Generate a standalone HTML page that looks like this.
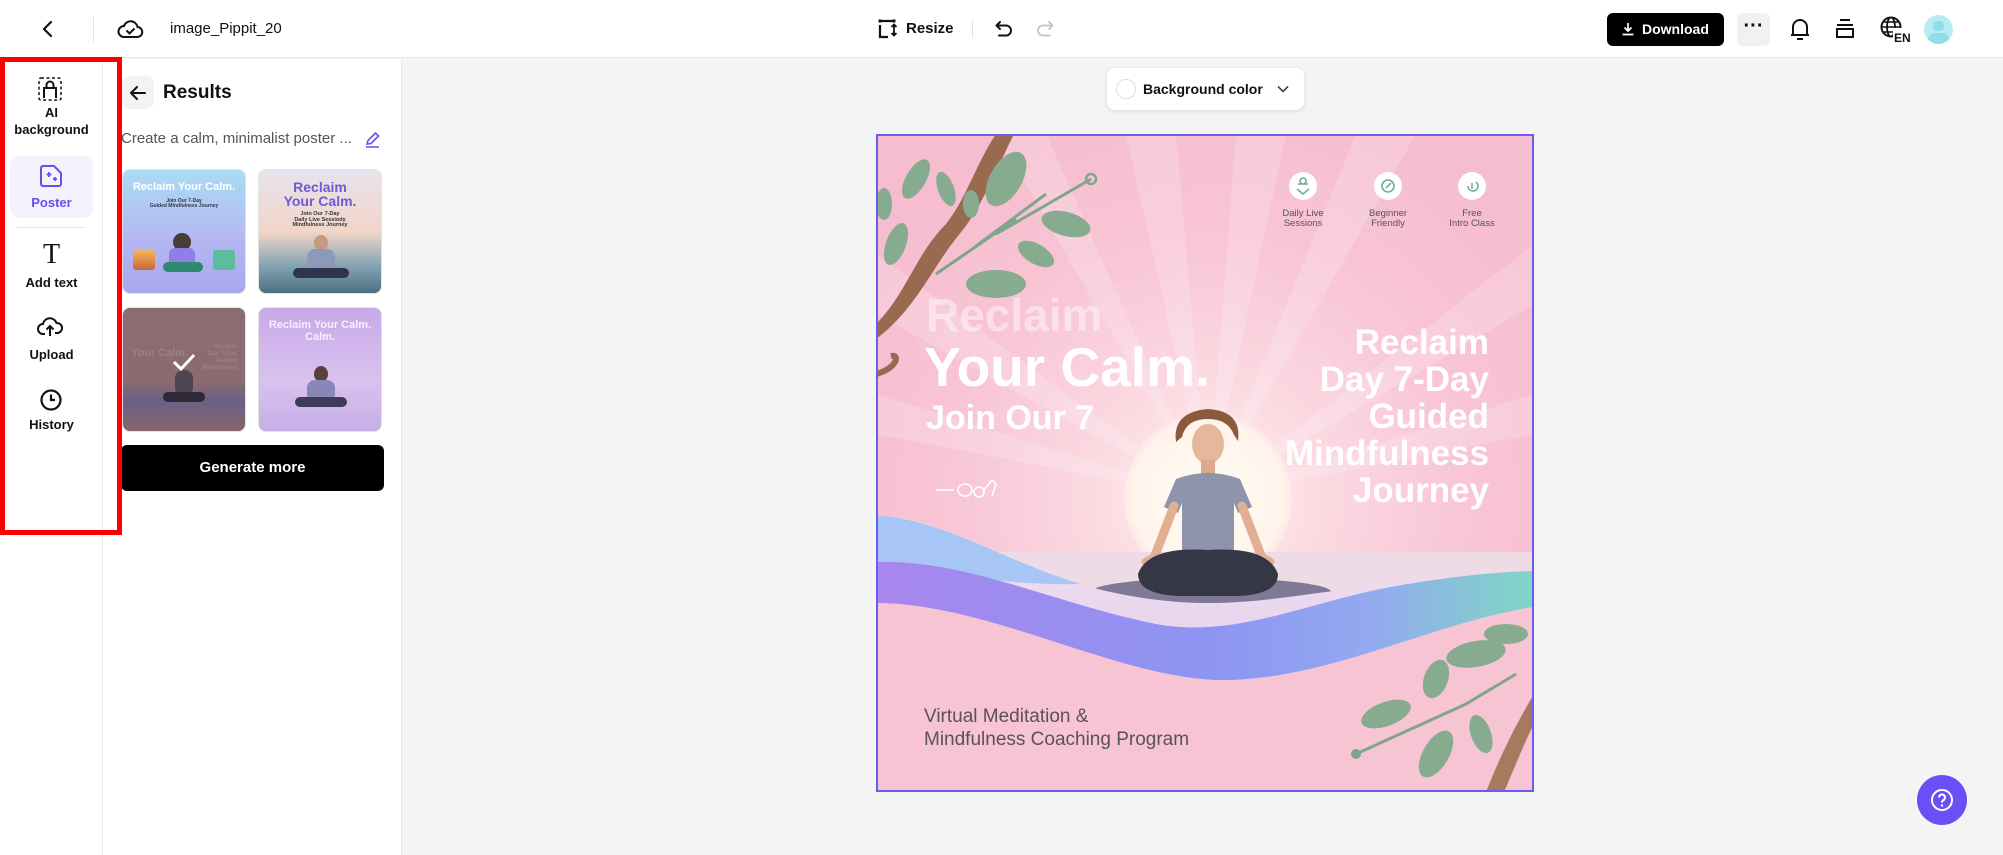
<!DOCTYPE html>
<html><head><meta charset="utf-8"><style>
*{box-sizing:border-box;margin:0;padding:0}
body{width:2003px;height:855px;overflow:hidden;background:#f4f4f5;font-family:"Liberation Sans",Arial,sans-serif;position:relative;color:#111}
.abs{position:absolute}
#top{left:0;top:0;width:2003px;height:58px;background:#fff;border-bottom:1px solid #e6e6e6}
#side{left:0;top:59px;width:103px;height:796px;background:#fff;border-right:1px solid #ececec}
#panel{left:103px;top:59px;width:299px;height:796px;background:#fff;border-right:1px solid #e8e8e8}
.lbl{position:absolute;width:103px;left:0;text-align:center;font-size:13px;font-weight:bold;line-height:17px}
.th{position:absolute;width:124px;height:125px;border-radius:8px;overflow:hidden;border:1px solid #e2e2e2}
.pt{position:absolute;font-weight:bold;color:#fff;white-space:nowrap;line-height:1}
</style></head><body>
<div id="top" class="abs"></div>
<svg class="abs" style="left:38px;top:19px" width="20" height="20" viewBox="0 0 20 20"><path d="M13 3 L6 10 L13 17" fill="none" stroke="#111" stroke-width="2.2" stroke-linecap="round" stroke-linejoin="round"/></svg>
<div class="abs" style="left:93px;top:17px;width:1px;height:25px;background:#e3e3e3"></div>
<svg class="abs" style="left:117px;top:17px" width="27" height="24" viewBox="0 0 27 24"><path d="M7 20 H20 a5 5 0 0 0 0.5-10 a7 7 0 0 0-13.5-1 a5.5 5.5 0 0 0 0 11z" fill="none" stroke="#111" stroke-width="2"/><path d="M9.5 13.5 l3 3 l5-5" fill="none" stroke="#111" stroke-width="2"/></svg>
<div class="abs" style="left:170px;top:20px;font-size:15px;color:#111">image_Pippit_20</div>
<svg class="abs" style="left:877px;top:18px" width="22" height="22" viewBox="0 0 22 22"><path d="M3 7 V19 H11 M3 3 H17" fill="none" stroke="#111" stroke-width="2.2"/><path d="M17 7 V17 M14.5 9 L17 6.5 L19.5 9 M14.5 15 L17 17.5 L19.5 15" fill="none" stroke="#111" stroke-width="1.8"/><rect x="1.5" y="1.5" width="3" height="3" fill="#111"/><rect x="15.5" y="1.5" width="3" height="3" fill="#111"/></svg>
<div class="abs" style="left:906px;top:20px;font-size:15px;font-weight:bold">Resize</div>
<div class="abs" style="left:972px;top:20px;width:1px;height:18px;background:#e3e3e3"></div>
<svg class="abs" style="left:993px;top:18px" width="22" height="22" viewBox="0 0 22 22"><path d="M7 4 L3.5 7.5 L7 11 M4 7.5 H13 a5 5 0 0 1 0 10 H6" fill="none" stroke="#111" stroke-width="2" stroke-linecap="round" stroke-linejoin="round"/></svg>
<svg class="abs" style="left:1034px;top:18px" width="22" height="22" viewBox="0 0 22 22"><path d="M15 4 L18.5 7.5 L15 11 M18 7.5 H9 a5 5 0 0 0 0 10 H16" fill="none" stroke="#c4c4c4" stroke-width="1.8" stroke-linecap="round" stroke-linejoin="round"/></svg>
<div class="abs" style="left:1607px;top:13px;width:117px;height:33px;background:#000;border-radius:6px;color:#fff;font-size:14px;font-weight:bold;line-height:33px;padding-left:35px">Download</div>
<svg class="abs" style="left:1620px;top:21px" width="16" height="16" viewBox="0 0 16 16"><path d="M8 2 V10 M4.5 6.5 L8 10 L11.5 6.5 M2.5 13.5 H13.5" fill="none" stroke="#fff" stroke-width="1.7"/></svg>
<div class="abs" style="left:1737px;top:13px;width:33px;height:33px;background:#f1f1f1;border-radius:6px;text-align:center;font-size:20px;font-weight:bold;line-height:26px">···</div>
<svg class="abs" style="left:1789px;top:16px" width="22" height="26" viewBox="0 0 22 26"><path d="M4 19 V11 a7 7 0 0 1 14 0 V19 Z M2 19 H20 M8 23 H14" fill="none" stroke="#111" stroke-width="2" stroke-linejoin="round"/></svg>
<svg class="abs" style="left:1834px;top:17px" width="22" height="24" viewBox="0 0 22 24"><path d="M6 3 H16 M3 8 H19 M3 12 H19 V20 H3 Z" fill="none" stroke="#111" stroke-width="2"/></svg>
<svg class="abs" style="left:1879px;top:15px" width="34" height="28" viewBox="0 0 34 28"><circle cx="12" cy="12" r="9.5" fill="none" stroke="#111" stroke-width="2"/><ellipse cx="12" cy="12" rx="4" ry="9.5" fill="none" stroke="#111" stroke-width="1.8"/><path d="M2.5 12 H21.5 M4 7 H20 M4 17 H14" stroke="#111" stroke-width="1.6"/><rect x="14" y="13" width="20" height="15" fill="#fff"/><text x="15" y="27" font-family="Liberation Sans" font-weight="bold" font-size="12" fill="#111">EN</text></svg>
<div class="abs" style="left:1924px;top:15px;width:29px;height:29px;border-radius:50%;background:#b8ecf2;overflow:hidden"><div style="position:absolute;left:9px;top:6px;width:11px;height:10px;border-radius:4px;background:#8fdde8"></div><div style="position:absolute;left:4px;top:18px;width:21px;height:14px;border-radius:10px;background:#8fdde8"></div></div>

<div id="side" class="abs"></div>
<svg class="abs" style="left:38px;top:77px" width="24" height="24" viewBox="0 0 24 24"><rect x="1" y="1" width="22" height="22" rx="2" fill="none" stroke="#111" stroke-width="1.5" stroke-dasharray="3 2.5"/><path d="M6 21 V11 H18 V21 M8.5 11 V8 a3.5 3.5 0 0 1 7 0 V11" fill="none" stroke="#111" stroke-width="2"/></svg>
<div class="lbl" style="top:104px">AI<br>background</div>
<div class="abs" style="left:10px;top:156px;width:83px;height:62px;background:#f3f2fd;border-radius:10px"></div>
<svg class="abs" style="left:39px;top:165px" width="24" height="22" viewBox="0 0 24 22"><path d="M2 3 a2 2 0 0 1 2-2 H15 L22 8 V19 a2 2 0 0 1-2 2 H4 a2 2 0 0 1-2-2 Z" fill="none" stroke="#6a4cf0" stroke-width="2"/><path d="M10 7 v5 M7.5 9.5 h5 M16 12 v4 M14 14 h4" stroke="#6a4cf0" stroke-width="1.8"/></svg>
<div class="lbl" style="top:194px;color:#6a4cf0">Poster</div>
<div class="abs" style="left:17px;top:227px;width:67px;height:1px;background:#e4e4e4"></div>
<div class="abs" style="left:0;top:241px;width:103px;text-align:center;font-family:'Liberation Serif',serif;font-size:28px;line-height:28px">T</div>
<div class="lbl" style="top:274px">Add text</div>
<svg class="abs" style="left:37px;top:314px" width="26" height="24" viewBox="0 0 26 24"><path d="M8 20 H6 a5 5 0 0 1 0-10 a7 7 0 0 1 13.5-1 a5 5 0 0 1 1 10 H18" fill="none" stroke="#111" stroke-width="2"/><path d="M13 22 V12 M9.5 15.5 L13 12 L16.5 15.5" fill="none" stroke="#111" stroke-width="2"/></svg>
<div class="lbl" style="top:346px">Upload</div>
<svg class="abs" style="left:39px;top:388px" width="24" height="24" viewBox="0 0 24 24"><circle cx="12" cy="12" r="9.5" fill="none" stroke="#111" stroke-width="2.2"/><path d="M12 6.5 V12 H16" fill="none" stroke="#111" stroke-width="2.2"/></svg>
<div class="lbl" style="top:416px">History</div>

<div id="panel" class="abs"></div>
<div class="abs" style="left:0;top:57px;width:122px;height:478px;border:5px solid #f00;z-index:5"></div>
<div class="abs" style="left:122px;top:76px;width:32px;height:33px;background:#f3f3f3;border-radius:8px"></div>
<svg class="abs" style="left:128px;top:83px" width="20" height="20" viewBox="0 0 20 20"><path d="M17 10 H3 M9 4 L3 10 L9 16" fill="none" stroke="#111" stroke-width="2" stroke-linecap="round" stroke-linejoin="round"/></svg>
<div class="abs" style="left:163px;top:82px;font-size:19px;font-weight:bold">Results</div>
<div class="abs" style="left:121px;top:130px;font-size:15px;color:#555">Create a calm, minimalist poster ...</div>
<svg class="abs" style="left:364px;top:131px" width="17" height="17" viewBox="0 0 17 17"><path d="M3 13 L4 9.5 L11.5 2 L14.5 5 L7 12.5 Z M2 16 H15" fill="none" stroke="#6a4cf0" stroke-width="1.6"/></svg>
<div class="th" style="left:122px;top:169px;background:linear-gradient(#a9dcf3,#b5b8f3 55%,#a8a6ef)">
 <div class="pt" style="left:0;width:122px;text-align:center;top:12px;font-size:11px">Reclaim Your Calm.</div>
 <div class="pt" style="left:0;width:122px;text-align:center;top:29px;font-size:5px;color:#334">Join Our 7-Day<br>Guided Mindfulness Journey</div>
 <div class="abs" style="left:50px;top:63px;width:18px;height:18px;border-radius:50%;background:#4a3b3b"></div>
 <div class="abs" style="left:46px;top:78px;width:26px;height:20px;border-radius:6px;background:#8f7de8"></div>
 <div class="abs" style="left:40px;top:92px;width:40px;height:10px;border-radius:6px;background:#2e8a6e"></div>
 <div class="abs" style="left:10px;top:80px;width:22px;height:20px;border-radius:3px;background:linear-gradient(#f5b45f,#c56a3a)"></div>
 <div class="abs" style="left:90px;top:80px;width:22px;height:20px;border-radius:3px;background:#5bbd9b"></div>
</div>
<div class="th" style="left:258px;top:169px;background:linear-gradient(#e8e2ee,#f2d6c8 50%,#7d9fb0 80%,#4d6f80)">
 <div class="pt" style="left:0;width:122px;text-align:center;top:10px;font-size:14px;color:#6b5bd6">Reclaim<br>Your Calm.</div>
 <div class="pt" style="left:0;width:122px;text-align:center;top:42px;font-size:5.5px;color:#333">Join Our 7-Day<br>Daily Live Sessiody<br>Mindfulness Journey</div>
 <div class="abs" style="left:55px;top:65px;width:14px;height:16px;border-radius:50%;background:#c79a80"></div>
 <div class="abs" style="left:48px;top:79px;width:28px;height:24px;border-radius:8px;background:#8a9ab8"></div>
 <div class="abs" style="left:34px;top:98px;width:56px;height:10px;border-radius:6px;background:#2e3548"></div>
</div>
<div class="th" style="left:122px;top:307px;background:linear-gradient(#8a6d72,#8b6a71 60%,#6b6087 75%,#85656c)">
 <div class="pt" style="left:8px;top:40px;font-size:11px;color:#9b8087">Your Calm.</div>
 <div class="pt" style="right:8px;top:36px;font-size:6px;color:#9b8087;text-align:right;line-height:7px">Reclaim<br>Day 7-Day<br>Guided<br>Mindfulness</div>
 <div class="abs" style="left:52px;top:62px;width:18px;height:26px;border-radius:8px;background:#4d4550"></div>
 <div class="abs" style="left:40px;top:84px;width:42px;height:10px;border-radius:6px;background:#2e2a35"></div>
 <svg class="abs" style="left:48px;top:44px" width="26" height="20" viewBox="0 0 26 20"><path d="M3 10 L10 17 L23 3" fill="none" stroke="#fff" stroke-width="3"/></svg>
</div>
<div class="th" style="left:258px;top:307px;background:linear-gradient(#c9a8e8,#d8c2ee 60%,#c7aee8)">
 <div class="pt" style="left:0;width:122px;text-align:center;top:11px;font-size:11px;line-height:12px;color:#f6f0ff">Reclaim Your Calm.<br>Calm.</div>
 <div class="abs" style="left:55px;top:58px;width:14px;height:16px;border-radius:50%;background:#5a4040"></div>
 <div class="abs" style="left:48px;top:72px;width:28px;height:22px;border-radius:8px;background:#8b86b8"></div>
 <div class="abs" style="left:36px;top:89px;width:52px;height:10px;border-radius:6px;background:#3e3c58"></div>
</div>
<div class="abs" style="left:121px;top:445px;width:263px;height:46px;background:#000;border-radius:6px;color:#fff;font-size:15px;font-weight:bold;text-align:center;line-height:46px">Generate more</div>

<div class="abs" style="left:1107px;top:68px;width:197px;height:42px;background:#fff;border-radius:8px;box-shadow:0 1px 4px rgba(0,0,0,.12)"></div>
<div class="abs" style="left:1116px;top:79px;width:20px;height:20px;border-radius:50%;border:1px solid #ddd"></div>
<div class="abs" style="left:1143px;top:81px;font-size:14px;font-weight:bold">Background color</div>
<svg class="abs" style="left:1276px;top:82px" width="14" height="14" viewBox="0 0 14 14"><path d="M2 4.5 L7 9.5 L12 4.5" fill="none" stroke="#444" stroke-width="1.6"/></svg>

<div class="abs" style="left:876px;top:134px;width:658px;height:658px;overflow:hidden;border:2px solid #6a5cf0;background:#f7c3d3">
<svg class="abs" style="left:-2px;top:-2px" width="658" height="658" viewBox="0 0 658 658">
<defs>
<radialGradient id="glow" cx="332" cy="364" r="420" gradientUnits="userSpaceOnUse"><stop offset="0" stop-color="#fff6f2"/><stop offset=".25" stop-color="#fcdbe3"/><stop offset=".6" stop-color="#f8c6d5"/><stop offset="1" stop-color="#f6bccf"/></radialGradient>
<radialGradient id="sun" cx="332" cy="364" r="90" gradientUnits="userSpaceOnUse"><stop offset="0" stop-color="#fffdf5"/><stop offset=".85" stop-color="#fff3ea"/><stop offset="1" stop-color="#fde2e4"/></radialGradient>
<linearGradient id="band" x1="0" x2="1"><stop offset="0" stop-color="#a886ee"/><stop offset=".5" stop-color="#8d94f2"/><stop offset=".75" stop-color="#93a9f0"/><stop offset="1" stop-color="#7fd7c6"/></linearGradient>
<linearGradient id="surf" x1="0" y1="0" x2="0" y2="1"><stop offset="0" stop-color="#f3e2ec"/><stop offset="1" stop-color="#d7c2f2"/></linearGradient>
</defs>
<rect width="658" height="658" fill="url(#glow)"/>
<g fill="#fff" opacity=".18">
<path d="M332 364 L250 0 L300 0Z"/><path d="M332 364 L360 0 L410 0Z"/><path d="M332 364 L120 0 L170 0Z"/><path d="M332 364 L480 0 L540 0Z"/><path d="M332 364 L0 120 L0 180Z"/><path d="M332 364 L658 110 L658 170Z"/><path d="M332 364 L0 260 L0 300Z"/><path d="M332 364 L658 260 L658 300Z"/>
</g>
<circle cx="332" cy="364" r="84" fill="url(#sun)"/>
<rect x="0" y="418" width="658" height="60" fill="#eedbe6"/>
<ellipse cx="335" cy="458" rx="120" ry="14" fill="#7e7a96"/>
<path d="M300 308 q-4-30 32-33 q34 2 30 32 l-4 -6 q-6-16-26-16 q-22 0-26 18z" fill="#8a5a3e"/>
<ellipse cx="332" cy="310" rx="16" ry="20" fill="#e6b79b"/>
<rect x="325" y="326" width="14" height="14" fill="#dca98d"/>
<path d="M300 345 q32-12 64 0 l12 28 l-14 6 l-4-10 l0 52 h-52 l0-52 l-4 10 l-14-6z" fill="#8e94ab"/>
<path d="M298 372 l-20 52 l-8 4 M366 372 l20 52 l8 4" fill="none" stroke="#e2af94" stroke-width="9" stroke-linecap="round"/>
<path d="M262 440 q10-28 70-24 q60-4 70 24 q0 20-40 22 l-60 0 q-40-2-40-22z" fill="#353844"/>
<path d="M0 381 C70 385 130 428 210 452 C300 476 360 470 420 462 C520 448 600 440 658 437 L658 658 L0 658 Z" fill="url(#surf)"/>
<path d="M0 381 C70 386 130 428 205 450 C140 452 70 440 0 432 Z" fill="#a7c6f6"/>
<path d="M0 428 C90 425 180 470 280 490 C360 505 430 468 520 452 C580 442 620 438 658 437 L658 473 C560 488 460 542 357 546 C250 550 120 470 0 469 Z" fill="url(#band)"/>
<path d="M0 469 C120 470 250 550 357 546 C460 542 560 488 658 473 L658 658 L0 658 Z" fill="#f7c4d4"/>
<path d="M0 190 C30 160 40 120 70 90 C90 65 100 30 120 0 L138 0 C118 40 105 75 82 102 C55 135 40 175 0 205 Z" fill="#9a6a50"/>
<path d="M0 240 C20 235 25 220 15 222" fill="none" stroke="#9a6a50" stroke-width="6"/>
<path d="M60 140 L140 85 M100 112 L170 60 M120 100 L215 45" stroke="#7fa58a" stroke-width="3" fill="none"/>
<circle cx="215" cy="45" r="5" fill="none" stroke="#7fa58a" stroke-width="2.5"/>
<g fill="#86ab8f">
<ellipse cx="40" cy="45" rx="10" ry="22" transform="rotate(30 40 45)"/>
<ellipse cx="70" cy="55" rx="8" ry="18" transform="rotate(-20 70 55)"/>
<ellipse cx="130" cy="45" rx="16" ry="30" transform="rotate(30 130 45)"/>
<ellipse cx="95" cy="70" rx="8" ry="14"/>
<ellipse cx="190" cy="90" rx="25" ry="12" transform="rotate(15 190 90)"/>
<ellipse cx="120" cy="150" rx="30" ry="14"/>
<ellipse cx="160" cy="120" rx="20" ry="10" transform="rotate(30 160 120)"/>
<ellipse cx="20" cy="110" rx="10" ry="22" transform="rotate(20 20 110)"/>
<ellipse cx="8" cy="70" rx="8" ry="16"/>
</g>
<path d="M658 560 C640 590 625 620 610 658 L628 658 C640 630 650 605 658 590 Z" fill="#a77a60"/>
<path d="M480 620 L590 570 L640 540" stroke="#7fa58a" stroke-width="3" fill="none"/>
<circle cx="480" cy="620" r="5" fill="#7fa58a"/>
<g fill="#86ab8f">
<ellipse cx="600" cy="520" rx="30" ry="13" transform="rotate(-10 600 520)"/>
<ellipse cx="560" cy="545" rx="12" ry="20" transform="rotate(20 560 545)"/>
<ellipse cx="510" cy="580" rx="26" ry="12" transform="rotate(-20 510 580)"/>
<ellipse cx="560" cy="620" rx="13" ry="26" transform="rotate(30 560 620)"/>
<ellipse cx="605" cy="600" rx="10" ry="20" transform="rotate(-20 605 600)"/>
<ellipse cx="630" cy="500" rx="22" ry="10"/>
</g>
<g fill="#fff"><circle cx="427" cy="52" r="14"/><circle cx="512" cy="52" r="14"/><circle cx="596" cy="52" r="14"/></g>
<g fill="none" stroke="#6fae93" stroke-width="1.6"><path d="M421 55 l6 5 l6-5 M427 44 a3 3 0 1 0 0.1 0 M422 50 h10"/><circle cx="512" cy="52" r="6"/><path d="M510 54 l5-5"/><path d="M592 52 a5 5 0 1 0 8-4 M596 49 v6"/></g>
<g font-family="Liberation Sans" font-size="9.5" fill="#555" text-anchor="middle"><text x="427" y="82">Daily Live</text><text x="427" y="92">Sessions</text><text x="512" y="82">Beginner</text><text x="512" y="92">Friendly</text><text x="596" y="82">Free</text><text x="596" y="92">Intro Class</text></g>
<path d="M60 356 H78 M82 356 a7 6 0 1 0 14 0 a7 6 0 1 0-14 0 M98 358 a5 5 0 1 0 10 0 a5 5 0 1 0-10 0 M108 356 l8-10 l4 4 l-4 12" fill="none" stroke="#fff" stroke-width="1.6"/>
</svg>
<div class="pt" style="left:48px;top:156px;font-size:46px;color:rgba(255,255,255,.45)">Reclaim</div>
<div class="pt" style="left:46px;top:204px;font-size:55px">Your Calm.</div>
<div class="pt" style="left:48px;top:265px;font-size:34px">Join Our 7</div>
<div class="pt" style="right:43px;top:188px;font-size:35px;line-height:37px;text-align:right">Reclaim<br>Day 7-Day<br>Guided<br>Mindfulness<br>Journey</div>
<div class="abs" style="left:46px;top:569px;font-size:19px;line-height:23px;color:#5a5258">Virtual Meditation &amp;<br>Mindfulness Coaching Program</div>
</div>

<div class="abs" style="left:1917px;top:775px;width:50px;height:50px;border-radius:50%;background:#6a4ff6"></div>
<svg class="abs" style="left:1930px;top:788px" width="24" height="24" viewBox="0 0 24 24"><circle cx="12" cy="12" r="10" fill="none" stroke="#fff" stroke-width="2"/><path d="M9 9.5 a3 3 0 1 1 4.5 2.6 c-1 .6-1.5 1.2-1.5 2.4" fill="none" stroke="#fff" stroke-width="2"/><circle cx="12" cy="17.5" r="1.2" fill="#fff"/></svg>
</body></html>
